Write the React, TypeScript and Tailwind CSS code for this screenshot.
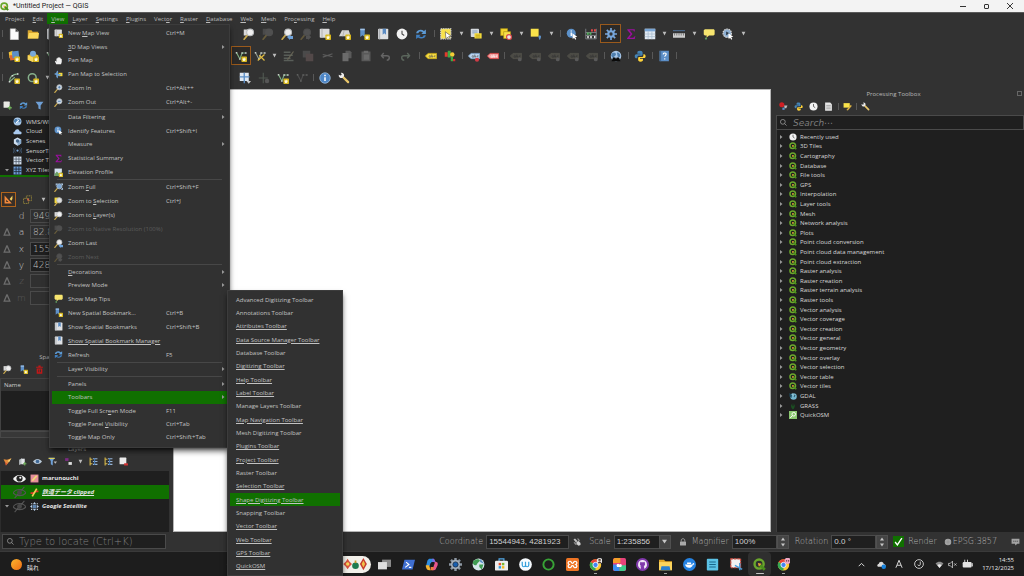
import type { ReactNode } from "react";
import clsx from "clsx";

/* ---------- icon pieces, all on a 16 x 16 grid ---------- */

const star = (
  <>
    <rect x="8.5" y="8.5" width="7.5" height="7.5" rx="1" fill="#d8b81c" />
    <path d="M12.2 9.6l.8 1.6 1.8.6-1.2 1.4.1 1.8-1.6-.7-1.7.6.2-1.7-1.1-1.4 1.8-.5z" fill="#fffbe0" />
  </>
);

const lens = (glass: string, ring = "#b9bcbe") => (
  <>
    <path d="M1.5 15L6 9.5" stroke="#c9a94e" strokeWidth="2.2" strokeLinecap="round" />
    <circle cx="9.5" cy="5.8" r="4.6" fill={glass} stroke={ring} strokeWidth="1.4" />
  </>
);

const label = (fill: string, stroke: string, text = "#555") => (
  <>
    <path d="M0.5 8L4 4.5h11.5v7H4z" fill={fill} stroke={stroke} />
    <path d="M5.5 8.8c0-2 2-2 2 0s-2 1-2 0M9 6v3.5c2 .6 2-2 0-1.500M13.800 7.600c-2-.6-2 2 0 1.600" stroke={text} fill="none" strokeWidth=".9" />
  </>
);

const vnodes = (color: string) => (
  <>
    <path d="M2 3.500L6.500 12 9.500 4h5" fill="none" stroke={color} strokeWidth="1.500" />
    <path d="M1 2.500h2v2H1zM8.500 3h2v2h-2zM13.500 3h2v2h-2zM5.500 11h2v2h-2z" fill="#c5cbc5" />
  </>
);

const refreshArrows = (
  <>
    <path d="M1.500 7C2 3 8 0.500 12 4l2.500-2v6H8.500l2-2C8 3.800 5 4.500 4.500 7z" fill="#5d9ad4" />
    <path d="M14.500 9.500c-.5 4-6.500 6-10.500 3l-2.500 2V9H7.500l-2 2c2.500 2 5.500 1 6-1.500z" fill="#3f7fc0" />
  </>
);

const wrench = (
  <>
    <path d="M7 7l6.500 6.500" stroke="#e8c66a" strokeWidth="3" strokeLinecap="round" />
    <path d="M1 3.500l2.500 1.300L5 3.500 3.800 1C6.500.5 8.800 2.800 8 5.500L5.800 8C3 8.500.5 6.500 1 3.500z" fill="#ececec" />
  </>
);

const bookmark = (
  <>
    <rect x="1.500" y="1" width="13.500" height="14" rx="1" fill="#dfe1e4" />
    <path d="M3.500 1v14" stroke="#a9adb2" strokeWidth="1.500" />
    <path d="M7.500 1h4.500v8L9.800 7 7.500 9z" fill="#5b8cc4" />
  </>
);

const clock = (
  <>
    <circle cx="8" cy="8" r="7.200" fill="#f2f2f2" />
    <path d="M8 3.500V8l3 2" fill="none" stroke="#444" strokeWidth="1.400" />
  </>
);

const hand = (
  <path d="M4 14.500L1.500 9.500l1-1 1.800 1.500V4.500h1.600L6 3h1.700l.3-1h1.700l.3 1.200h1.700v1.600H13l.8 1v5L12.500 14.500z" fill="#f0f0f0" />
);

const qgis = (
  <>
    <circle cx="7.500" cy="7.500" r="5.600" fill="none" stroke="#6aa72c" strokeWidth="3" />
    <path d="M8 8l6.500 6.500" stroke="#4c8f1c" strokeWidth="3.400" />
    <path d="M6 6l4.500 1.200-3.300 3.300z" fill="#f0a23c" />
  </>
);

const chrome = (
  <>
    <circle cx="8" cy="8.500" r="7" fill="#fcc934" />
    <path d="M8 8.500L1.900 5A7 7 0 0 1 14.100 5z" fill="#ea4335" />
    <path d="M8 8.500L1.900 5A7 7 0 0 0 8 15.500z" fill="#34a853" />
    <circle cx="8" cy="8.500" r="3.200" fill="#4285f4" stroke="#fff" />
  </>
);

const sigma = (
  <path d="M3 1.500h10v3.200h-1c-.3-1.400-.7-1.800-2-1.800H6l4 5-4.200 5H10.500c1.500 0 2-.7 2.500-2.200h.8L13 14.500H2.800v-1L7.500 8 3 2.500z" fill="#9c0fa0" />
);

const globe = (
  <>
    <circle cx="8" cy="8" r="7" fill="#a9c8e8" />
    <path d="M3 4c2-1 5-.5 5 1.500S5 8 5 10s-3-1-3.500-3zM10 3c3 1 4 3 3.500 5.500C12 10 10 9 10 7.500S8.500 4 10 3z" fill="#4f7fae" />
  </>
);

const mapPage = (
  <>
    <rect x="1" y="1" width="13" height="12" rx="1" fill="#dcdcdc" />
    <path d="M4 1v12" stroke="#b4b4b4" strokeWidth="1.500" />
  </>
);

const python = (
  <>
    <path d="M8 1c-3 0-3.500 1-3.500 2.500V5H8.500v.7H3C1.500 5.700 1 7 1 8.500S2 11 3 11h1.500V9.500C4.500 8 5.500 7.500 6.500 7.500h3.500c1 0 1.500-.8 1.500-1.800v-2C11.500 2 10.500 1 8 1z" fill="#4584b6" />
    <path d="M8.500 15.500c3 0 3.500-1 3.500-2.500v-1.500H8v-.7h5.500c1.300 0 2-1 2-2.500S14.500 5.700 13.500 5.700H12.500V7.500c0 1.200-1 1.800-2 1.800H7c-1 0-1.500.8-1.500 1.700v2c0 1.500 1 2.500 3 2.500z" fill="#ffd43b" />
  </>
);

const bubble = (
  <>
    <path d="M2.500 1.500h12l1 1.500v5.500l-1.500 1.500H8L4.500 13 5 10H2.500L1 8.500V3z" fill="#f7e56f" />
    <circle cx="4" cy="14" r="1.500" fill="#5f9f61" />
  </>
);

const cursor = <path d="M8.500 7l6.500 4.800-2.800.5 1.500 2.500-1.400.8-1.500-2.500-1.800 2z" fill="#fff" />;

const ICONS: Record<string, ReactNode> = {
  page: <path d="M3 1h7l4 4v10.500H3zM10 1v4h4" fill="#fafafa" stroke="#bbb" strokeWidth=".6" />,
  folder: (
    <>
      <path d="M1 3h5l1.500 2H15v9H1z" fill="#d9a62e" />
      <path d="M1 14L2.500 6.500H16L15 14z" fill="#fbd75b" />
    </>
  ),
  layers: (
    <>
      <path d="M1 3l5-2 2 9-6 1z" fill="#f0c43a" />
      <path d="M2 7l5 0 3 6-7 1z" fill="#e0692f" />
      <path d="M5 2l9-1 1 9-9 1z" fill="#5d8fc7" />
      {star}
    </>
  ),
  package: (
    <>
      <path d="M1 7l7-3 7 3v6l-7 3-7-3z" fill="#e3b52f" />
      <circle cx="8" cy="5" r="4" fill="#78a8d8" />
      <path d="M1 7l7 3v6l-7-3z" fill="#f6d75e" />
      {star}
    </>
  ),
  arc: (
    <>
      <path d="M2 13C2 7 6 3 13 2.500M2 13L9 7" fill="none" stroke="#86b08b" strokeWidth="1.400" />
      <path d="M1 12h2v2H1zM12 1.500h2v2h-2zM5 4h2v2H5z" fill="#d5dad5" />
      {star}
    </>
  ),
  circle: (
    <>
      <circle cx="7" cy="7.500" r="5.200" fill="none" stroke="#86b08b" strokeWidth="2" />
      {star}
    </>
  ),
  zoomin: (
    <>
      {lens("#c9d8e6")}
      <path d="M9.500 3.500v4.600M7.200 5.800h4.600" stroke="#3d6ea5" strokeWidth="1.300" />
    </>
  ),
  zoomout: (
    <>
      {lens("#c9d8e6")}
      <path d="M7.200 5.800h4.600" stroke="#3d6ea5" strokeWidth="1.500" />
    </>
  ),
  zoomfull: (
    <>
      {lens("#7ba6d4", "#a9b9c8")}
      <path d="M3 1h4L3 5zM16 1v4l-4-4zM16 12h-4l4-4z" fill="#aecbea" />
    </>
  ),
  zoomsel: (
    <>
      <rect x="1" y="1" width="9" height="10" fill="#f4d93c" />
      {lens("#dedede")}
    </>
  ),
  zoomlayer: (
    <>
      <rect x="1" y="2" width="8" height="8" fill="#d9d9d9" />
      {lens("#f0f0f0")}
    </>
  ),
  zoomnative: (
    <g opacity=".35">
      <rect x="1" y="1" width="8" height="8" fill="#777" />
      {lens("#888", "#888")}
    </g>
  ),
  zoomlast: (
    <>
      {lens("#ededed")}
      <path d="M8 12l4-3.500v2h4v4h-4v1.500z" fill="#6ea2da" />
    </>
  ),
  zoomnext: (
    <g opacity=".3">
      {lens("#999", "#888")}
      <path d="M15 12l-4-3.500v2H8v4h3v1.500z" fill="#999" />
    </g>
  ),
  mapview: (
    <>
      {mapPage}
      {star}
    </>
  ),
  map3d: (
    <>
      <path d="M4 3h9l2.500 8H0z" fill="#d6d6d6" />
      <path d="M5 11L7 3" stroke="#aaa" />
      {star}
    </>
  ),
  newbookmark: (
    <>
      <path d="M3 1h6v11L6 9.500 3 12z" fill="#5f91c9" />
      <path d="M3 1h6v2H3z" fill="#a2c2e4" />
      {star}
    </>
  ),
  bookmark,
  clock,
  refresh: refreshArrows,
  hand,
  pansel: (
    <>
      <path d="M8 5h7v6H8z" fill="#f3da3d" />
      <path d="M6 1l2 3H7v3h3l3 1-3 2H7v3l-1 2-2-3V9L1 8V6l3-.5V4z" fill="#6c9fd3" />
    </>
  ),
  selectrect: (
    <>
      <rect x="1" y="1" width="13.500" height="13.500" fill="#f8e34c" stroke="#d8d8d8" strokeWidth="1.500" strokeDasharray="2 1" />
      <path d="M7 5l8 6-3.500.5 2 3-1.500 1-2-3.200L8 14.500z" fill="#fff" stroke="#333" strokeWidth=".7" />
    </>
  ),
  selectform: (
    <>
      <rect x="1" y="1" width="11" height="11" rx="1" fill="#d5d9de" />
      <path d="M3 4h7M3 6.500h7" stroke="#6a8db3" />
      <rect x="6" y="7" width="9.500" height="7" fill="#f5dc3c" />
      <path d="M7.500 9.500h6M7.500 12h6" stroke="#a89010" />
    </>
  ),
  deselect: (
    <>
      <rect x="1" y="1" width="9" height="9" fill="#f4d62f" stroke="#af9416" />
      <rect x="5" y="5" width="9" height="9" fill="#f9e24a" stroke="#af9416" />
      <circle cx="12" cy="12" r="3.300" fill="#e7e7e7" stroke="#d7484c" strokeWidth="1.600" />
    </>
  ),
  selectloc: (
    <>
      <rect x="1" y="1" width="10.500" height="10.500" fill="#f9e24a" />
      <path d="M13 16c-2-3-2.500-6 0-6s2 3 0 6z" fill="#5f93cb" />
    </>
  ),
  identify: (
    <>
      <circle cx="7" cy="7" r="6" fill="#5c91c9" />
      <path d="M7 6v4.500M7 3.200v1.500" stroke="#fff" strokeWidth="1.800" />
      {cursor}
    </>
  ),
  calc: (
    <>
      <path d="M1 1v13.500h14V1M1 6h14M1 10h14" fill="none" stroke="#8c9296" strokeWidth="1" />
      <path d="M8 1.500h2.500v3H8zM12 1.500h2.500v3H12z" fill="#e44848" />
      <path d="M2.500 6h2.500v3H2.500zM6 6h2.500v3H6z" fill="#55b45f" />
      <path d="M3 10.500h2v3H3zM7 10.500h2v3H7zM12 10.500h2v3h-2z" fill="#eee" />
    </>
  ),
  gear: (
    <>
      <path d="M8 0v16M0 8h16M2.400 2.400l11.200 11.200M13.600 2.400L2.400 13.600" stroke="#77a7dc" strokeWidth="2.200" />
      <circle cx="8" cy="8" r="5" fill="#77a7dc" />
      <circle cx="8" cy="8" r="2.200" fill="#323232" />
    </>
  ),
  sigma,
  table: (
    <>
      <rect x="1" y="1" width="14" height="14" fill="#e4ecf4" />
      <path d="M1 1h14v3.500H1z" fill="#7aa6d6" />
      <path d="M1 8h14M1 11.500h14M5.500 4.500V15M10.500 4.500V15" stroke="#a8bccf" />
    </>
  ),
  ruler: (
    <>
      <path d="M0 3.500h16" stroke="#496484" strokeWidth="1.600" />
      <path d="M0 7h16v6H0z" fill="#cdcdcd" />
      <path d="M2 7v3M5 7v3M8 7v3M11 7v3M14 7v3" stroke="#666" />
    </>
  ),
  bubble,
  zoomgear: (
    <>
      <circle cx="7" cy="7" r="5.500" fill="#8eb0d4" stroke="#d5d5d5" strokeWidth="1.800" strokeDasharray="2 1" />
      <path d="M5.500 4.500L10 7l-4.500 2.500z" fill="#2f3c4a" />
      {cursor}
    </>
  ),
  vnew: (
    <>
      {vnodes("#7dad82")}
      {star}
    </>
  ),
  vtool: (
    <>
      {vnodes("#8a948b")}
      <path d="M5 14L14 6M7 7l7 7" stroke="#e0bd43" strokeWidth="1.600" />
    </>
  ),
  vdim: <g opacity=".3">{vnodes("#8c8c8c")}</g>,
  editlines: (
    <g opacity=".4">
      <path d="M1 3h9M1 7h12M1 11h9M1 14h13" stroke="#94a193" strokeWidth="2" />
      <path d="M14 2L6 13" stroke="#bfb68f" strokeWidth="1.500" />
    </g>
  ),
  stack: (
    <g opacity=".35">
      <path d="M1 1h10v9H1z" fill="#777" />
      <path d="M5 5h10v10H5z" fill="#927676" />
    </g>
  ),
  cut: <path d="M1 6l13 3M14 5L1 9.500" stroke="#5c5c5c" strokeWidth="1.700" />,
  copy: (
    <g fill="#6b6b6b">
      <path d="M6 1h6l2 2v8H6z" opacity=".7" />
      <path d="M2 4h8v11H2z" />
    </g>
  ),
  paste: (
    <g fill="#6a6a6a">
      <path d="M2 2h12v13H2z" opacity=".7" />
      <path d="M5 1h6v3H5zM5 6h7v7H5z" />
    </g>
  ),
  undo: <path d="M5 4L2 7.500 5 11M3 7.500h6c5 0 4 6 0 6" fill="none" stroke="#656565" strokeWidth="2" />,
  redo: <path d="M11 4l3 3.500-3 3.500M13 7.500H7c-5 0-4 6 0 6" fill="none" stroke="#5b665c" strokeWidth="2" />,
  labely: label("#f5db40", "#c9ab16"),
  diagram: (
    <>
      <path d="M1 3h4v6H1z" fill="#e23b2e" />
      <path d="M5 1h4v9H5z" fill="#3faa45" />
      <circle cx="11" cy="6" r="3" fill="#f2ce36" />
      <path d="M9 9h3v6H9z" fill="#3faa45" />
      <path d="M12 12h3v3h-3z" fill="#d32f2f" />
    </>
  ),
  labelb: (
    <>
      {label("#b9d3ef", "#7ea4cc")}
      <circle cx="12" cy="13" r="2.800" fill="#cf3b46" />
    </>
  ),
  labelr: label("#f4a0a0", "#e03e3e", "#fff"),
  labeldim: (
    <g opacity=".45">
      {label("#6c6a5e", "#7b7868", "#333")}
      <circle cx="13" cy="12.500" r="2.500" fill="#8a8a8a" />
    </g>
  ),
  metasearch: (
    <>
      {globe}
      <path d="M2 15l2-5h3l1 2 1-2h3l2 5z" fill="#0a0a0a" />
    </>
  ),
  python,
  help: (
    <>
      <rect x="2" y="1" width="12.500" height="14" fill="#5c8fc8" />
      <path d="M3.500 1v14" stroke="#35597f" />
      <path d="M7 6c0-3 4.500-2.500 3.800 0-.3 1-1.800 1.500-1.800 3M9 11v1.600" fill="none" stroke="#fff" strokeWidth="1.500" />
    </>
  ),
  info: (
    <>
      <circle cx="8" cy="8" r="7" fill="#4d86c6" stroke="#9dbfe2" />
      <path d="M8 7v5M8 3.800v1.700" stroke="#fff" strokeWidth="2" />
    </>
  ),
  wrench,
  snapgrid: (
    <>
      <rect x="1" y="1" width="12" height="11" fill="#dfe8f2" />
      <path d="M7 1v14M1 6.500h13" stroke="#5c8fc8" strokeWidth="1.800" />
      <path d="M10 12h6l-3 3.500z" fill="#ccc" />
    </>
  ),
  crossdim: (
    <g opacity=".35">
      <path d="M7 1v14M1 8h12" stroke="#8aa08c" strokeWidth="1.500" />
      <circle cx="12" cy="12" r="3" fill="#999" />
    </g>
  ),
  addlayer: (
    <>
      <rect x="1" y="1" width="11" height="11" rx="1" fill="#e9e9e4" />
      <path d="M12 8.500v7M8.500 12h7" stroke="#6fae5b" strokeWidth="2.400" />
    </>
  ),
  filter: <path d="M1 1.500h14L10 8v7l-4-1.500V8z" fill="#6fa0d6" />,
  filterdrop: (
    <>
      <path d="M1 1.500h11L8.500 7v8L5 13V7z" fill="#6fa0d6" />
      <path d="M1 1.500h11v2H1z" fill="#dfd05a" />
      <path d="M10 8h6l-3 4z" fill="#bbb" />
    </>
  ),
  wms: (
    <>
      {globe}
      <path d="M5 11l6-6" stroke="#fff" strokeWidth="1.500" />
    </>
  ),
  cloud: <path d="M3 13C-.5 12.500 0 8 3.500 8 4 3 11 3 11.500 7.500 16.500 7.500 16 13 13 13z" fill="#a9c9ee" />,
  scenes: (
    <>
      <path d="M8 1l6.500 3.500v7L8 15.500l-6.500-4v-7z" fill="#cfdff0" />
      <path d="M8 8l6.500-3.500v7L8 15.500z" fill="#87a9cc" />
      <circle cx="8" cy="7" r="3" fill="#47698c" />
    </>
  ),
  sensor: (
    <>
      <circle cx="8" cy="8" r="2" fill="#78a7db" />
      <path d="M4.500 4.500c-2 2-2 5 0 7M11.500 4.500c2 2 2 5 0 7M2 3c-2.500 3-2.500 7 0 10M14 3c2.500 3 2.500 7 0 10" fill="none" stroke="#5a7fa8" />
    </>
  ),
  grid: (
    <>
      <rect x="1" y="1" width="14" height="14" fill="#d5e2f0" />
      <path d="M1 5.500h14M1 10h14M5.500 1v14M10.500 1v14" stroke="#47525e" strokeWidth="1.300" />
    </>
  ),
  gridblue: (
    <>
      <rect x="1" y="1" width="14" height="14" fill="#6f9fd8" />
      <path d="M1 5.500h14M1 10h14M5.500 1v14M10.500 1v14" stroke="#1f2a38" strokeWidth="1.500" />
    </>
  ),
  triangle: (
    <>
      <path d="M1 1v14h13zM4 8.500l4 4H4z" fill="#f1893c" fillRule="evenodd" />
      <path d="M15 1l-5 6 3 3 2-3z" fill="#f0d264" />
    </>
  ),
  construct: (
    <>
      <path d="M1 15V6h9v9zM6 6V1.500h9V10h-5" fill="none" stroke="#9a8a3b" strokeWidth="1.600" strokeDasharray="2 1" />
      <path d="M7 7l4-1-2 6z" fill="#e0604c" />
    </>
  ),
  trash: <path d="M2 3h12v2H2zM6 1h4v2H6zM3 6h10v9.500H3zM6 8v5h1.500V8zM9 8v5h1.500V8z" fill="#c01818" fillRule="evenodd" />,
  style: (
    <>
      <path d="M1 4l6 1 8-3-6 9-4 4-1-5z" fill="#e28a3b" />
      <path d="M8 7l7-5-4 7z" fill="#f3da7c" />
      <path d="M3 9l4 3-1 3z" fill="#cc4337" />
    </>
  ),
  addgroup: (
    <>
      <path d="M2 5l5-3v10l-5 2z" fill="#b7bdc2" />
      <path d="M6 3h6v10H6z" fill="#e2e5e8" />
      <path d="M12 9v6M9 12h6" stroke="#6fae5b" strokeWidth="2" />
    </>
  ),
  eyeblue: (
    <>
      <path d="M0 8c4-6 12-6 16 0-4 6-12 6-16 0z" fill="#b9c9d8" />
      <circle cx="8" cy="8" r="3.200" fill="#3f6896" />
    </>
  ),
  expr: (
    <>
      <path d="M2 2h6v5H2z" fill="#7c2b83" />
      <path d="M8 9h6v5H8z" fill="#dedede" />
    </>
  ),
  expand: (
    <>
      <path d="M2 1v14M2 4h4M2 12h4" stroke="#d4b64a" strokeWidth="2" />
      <path d="M7 3h8M7 8h8M7 13h8" stroke="#9bb7d6" strokeWidth="2" />
      <path d="M10 2v12" stroke="#477bb7" strokeWidth="2" />
    </>
  ),
  remove: (
    <>
      <rect x="1" y="1" width="12" height="12" rx="1" fill="#ececec" />
      <rect x="9" y="11" width="7" height="4" rx="1" fill="#cf3434" />
    </>
  ),
  eye: (
    <>
      <path d="M0 8.500C4 2 12 2 16 8.500 12 14 4 14 0 8.500z" fill="#f4f4f4" />
      <circle cx="8" cy="8" r="3.800" fill="#222" />
      <circle cx="9" cy="7" r="1.300" fill="#fff" />
    </>
  ),
  eyeoff: (
    <>
      <path d="M0 8.500C4 3 12 3 16 8.500 12 13 4 13 0 8.500zM2 15L14 1" fill="none" stroke="#555" strokeWidth="1.300" />
      <circle cx="8" cy="8" r="3" fill="#484848" />
    </>
  ),
  polylayer: (
    <>
      <rect x="1" y="1" width="14" height="14" fill="#e58f9a" />
      <path d="M4 12L12 3" stroke="#f4dc76" strokeWidth="3" />
    </>
  ),
  linelayer: (
    <>
      <path d="M1 9h5l4-3h5" fill="none" stroke="#e0322c" strokeWidth="3" />
      <path d="M4 15L12 1" stroke="#f3cf55" strokeWidth="3" />
    </>
  ),
  xyzlayer: (
    <>
      <path d="M8 0l3 4H5zM8 16l3-4H5zM0 8l4-3v6zM16 8l-4-3v6z" fill="#b4cce5" />
      <path d="M5 5h6v6H5z" fill="#5c83ad" />
      <path d="M2 2h2v2H2zM12 2h2v2h-2zM2 12h2v2H2zM12 12h2v2h-2z" fill="#d6e3f0" />
    </>
  ),
  elevation: (
    <>
      <rect x="1" y="1" width="13" height="13" fill="#d5e4f1" />
      <path d="M1 11l4-5 4 4 5-3v7H1z" fill="#6b9f64" />
      {star}
    </>
  ),
  models: (
    <>
      <circle cx="5" cy="5" r="4.500" fill="#cf1f24" />
      <path d="M6 10h4v4H6z" fill="#5c8fc8" />
      <path d="M9 6h6l-2 5h-3z" fill="#bcbcbc" />
    </>
  ),
  results: (
    <>
      <path d="M2 1h9l3 3v11.500H2z" fill="#e6e6e6" />
      <path d="M4 6h8M4 9h8M4 12h8" stroke="#777" />
    </>
  ),
  editplace: (
    <>
      <path d="M1 2h11v8H1z" fill="#f9e24a" />
      <path d="M6 14l8-9 1.500 2-7 8z" fill="#dfb544" />
    </>
  ),
  qgis,
  gdal: (
    <>
      <circle cx="9" cy="9" r="6.500" fill="#74b6cf" />
      <path d="M1 2l5 4-1 6-4-3zM9 4l4 3-3 4z" fill="#1f4f66" />
      <path d="M6 1l2 4 4 1-4 1z" fill="#dff2f7" />
    </>
  ),
  grass: <path d="M8 15C3 11 4 6 5 4l2 5 1-8 1 8 2-5c1 3 1 8-3 11z" fill="#1b4f22" />,
  quickosm: (
    <>
      <rect x="0" y="0" width="16" height="16" fill="#8bc870" />
      <circle cx="9.500" cy="6.500" r="3.600" fill="none" stroke="#fff" strokeWidth="1.800" />
      <path d="M2.500 14L7 9" stroke="#fff" strokeWidth="2" />
    </>
  ),
  search: (
    <path d="M10.500 10.500L15 15M12 6.500a5.500 5.500 0 1 1-11 0 5.500 5.500 0 0 1 11 0z" fill="none" stroke="#a8a8a8" strokeWidth="1.600" />
  ),
  delta: <path d="M7 2h2l5 12H2zM5 12h6L8 5z" fill="#6d6d6d" fillRule="evenodd" />,
  satellite: (
    <>
      <path d="M1 3l3-2 5 5-3 3z" fill="#c0c0c0" />
      <path d="M8 1l3 0 3 4-2 2zM1 9l3-1 4 5-3 1z" fill="#8c8c8c" />
      <path d="M7 8l4-2 4 4v4l-4 1.500L7 12z" fill="#d2d2d2" />
    </>
  ),
  lock: (
    <>
      <rect x="2" y="7" width="12" height="8" rx="1" fill="#aaa" />
      <path d="M4.500 7V4.500c0-4 7-4 7 0V7" fill="none" stroke="#aaa" strokeWidth="1.800" />
    </>
  ),
  crs: (
    <>
      <circle cx="8" cy="8" r="6.500" fill="#a6a6a6" />
      <path d="M2 8h12M8 2v12" stroke="#8a8a8a" />
    </>
  ),
  message: (
    <>
      <path d="M1 3h14v9h-4l-3 3-1-3H1z" fill="#a2a2a2" />
      <path d="M4 7.500h2M7.500 7.500h2M11 7.500h1.500" stroke="#333" strokeWidth="1.500" />
    </>
  ),
  /* desktop taskbar */
  taskview: (
    <>
      <path d="M5 2h11v9H5z" fill="#8a8a8a" />
      <path d="M0 5h11v9H0z" fill="#dedede" />
    </>
  ),
  powershell: (
    <>
      <path d="M3 2h13l-3 12H0z" fill="#3f6fd1" />
      <path d="M5 5l3.500 3L4 11.500M8.500 11.500h3" fill="none" stroke="#fff" strokeWidth="1.400" />
    </>
  ),
  copilot: (
    <>
      <path d="M5 1h5l2 4H8L5 11H1L3 3z" fill="#2f8ee0" />
      <path d="M10 1c2 0 2 3 3 4 3 0 3 2 2.500 4L13 14c-1 1-3 1-4 1l3-9z" fill="#e8568c" />
      <path d="M1 9h4l2 6H5c-3 0-4-3-4-6z" fill="#f5b32f" />
      <path d="M7 11h4l-1 4H7z" fill="#f07a3c" />
      <path d="M9 1h2l2 4H9z" fill="#7c6be6" />
      <path d="M7 6h3l-1 4H6z" fill="#1c1c1c" />
    </>
  ),
  settings: (
    <>
      <path d="M8 0v16M0 8h16M2.400 2.400l11.200 11.200M13.600 2.400L2.400 13.600" stroke="#8c97a3" strokeWidth="3" />
      <circle cx="8" cy="8" r="5.700" fill="#a4afba" />
      <circle cx="8" cy="8" r="3.200" fill="#185fb0" stroke="#1c2e42" />
    </>
  ),
  earth: (
    <>
      <circle cx="8" cy="8" r="7.300" fill="#d5e6ea" />
      <path d="M1 5c2-4 6-4 8-3s-1 3-2 4-1 3-3 3-3-2-3-4zM9 8l5 0-2 6-3-3z" fill="#3f9b52" />
      <path d="M10 1l5 6-5-2z" fill="#5289c5" />
    </>
  ),
  store: (
    <>
      <path d="M5 4V1h6v3" fill="none" stroke="#53a9e8" strokeWidth="1.400" />
      <rect x="0" y="3.500" width="16" height="12" rx="1.500" fill="#ededed" />
      <path d="M4.500 6h3v3h-3z" fill="#e8512a" />
      <path d="M8.500 6h3v3h-3z" fill="#7cb82f" />
      <path d="M4.500 10h3v3h-3z" fill="#2b9de0" />
      <path d="M8.500 10h3v3h-3z" fill="#f5b81f" />
    </>
  ),
  wacom: (
    <>
      <circle cx="8" cy="8" r="7.800" fill="#f7fbff" />
      <path d="M4 4.500v4c0 3 4 3 4 0V4.500M8 8.500c0 3 4 3 4 0v-4" fill="none" stroke="#36a0dc" strokeWidth="1.500" />
    </>
  ),
  ring: <circle cx="8" cy="8" r="6.300" fill="none" stroke="#38a336" strokeWidth="2.400" />,
  xampp: (
    <>
      <rect x="0" y="0" width="16" height="16" rx="2" fill="#ee7424" />
      <path d="M5 4c-3 0-3 3-1 4-2 1-2 4 1 4 2 0 1-2.500 3-2.500S9 12 11 12c3 0 3-3 1-4 2-1 2-4-1-4-2 0-1 2.500-3 2.500S7 4 5 4z" fill="none" stroke="#fff" strokeWidth="1.500" />
    </>
  ),
  chromea: (
    <>
      {chrome}
      <circle cx="13" cy="3.500" r="3.500" fill="#e9e9e9" />
      <path d="M11.500 2.500a1.500 1.500 0 0 1 3 0v1h-3zM11 6.500c0-3 4-3 4 0z" fill="#52392d" />
    </>
  ),
  creative: (
    <>
      <rect x="0" y="0" width="16" height="16" rx="2" fill="#e7427b" />
      <path d="M0 8h8v8H2l-2-2z" fill="#3b8ff2" />
      <path d="M8 9h8v5l-2 2H8z" fill="#3ecb8c" />
      <path d="M2 0h7v6H0V2z" fill="#f4a02a" />
      <path d="M5 11c-2-3 1-5 3-3 2-2 4 1 2 3z" fill="#fff" />
    </>
  ),
  github: (
    <>
      <circle cx="8" cy="8" r="8" fill="#8139ac" />
      <path d="M8 2.500a5.500 5.500 0 0 0-2 10.600V11.500l-1.500-.7 1.500-.3.500-.7C4.500 9.300 4.500 7 5.200 6.200L5.300 4.700 6.700 5.300h2.600l1.400-.6.1 1.500c.7.800.7 3.100-1.300 3.600l.5 1v2.300A5.500 5.500 0 0 0 8 2.500z" fill="#f2e8f7" />
    </>
  ),
  explorer: (
    <>
      <path d="M0 2h6l2 2h8v11H0z" fill="#e0a526" />
      <path d="M0 5h16v10H0z" fill="#fcd45c" />
      <path d="M3 10h10l1 5H2z" fill="#2a7fcf" />
    </>
  ),
  docker: (
    <>
      <circle cx="8" cy="8" r="8" fill="#2583e3" />
      <path d="M2.500 8h9c.3-1.500 1-2 1.500-2l1 1.500c-.5 1-1.500 1-2 1C11 13 4 13.500 2.500 8zM5 5.500h5V7.500H5z" fill="#fff" />
    </>
  ),
  notepad: (
    <>
      <rect x="1" y="1" width="14" height="14.500" rx="1" fill="#5cc3e6" />
      <path d="M4 5h8M4 8h8M4 11h8" stroke="#18688c" strokeWidth="1.300" />
    </>
  ),
  snip: (
    <>
      <rect x="1" y="1" width="12" height="11" fill="#f2f2f2" stroke="#cf4c40" strokeWidth="1.500" strokeDasharray="3 1" />
      <path d="M6 9l9 5M12 6v9" stroke="#4a9cd8" strokeWidth="1.700" />
    </>
  ),
  chromeb: (
    <>
      {chrome}
      <circle cx="13" cy="3.500" r="3.800" fill="#efa8c4" />
      <path d="M11 3.500h1.500M13.500 3.500H15" stroke="#573040" strokeWidth="1.500" />
    </>
  ),
  chevron: <path d="M3 11l5-5 5 5" fill="none" stroke="#ddd" strokeWidth="1.700" />,
  onedrive: (
    <>
      <path d="M2 12C-1 10 1 7 3 7c1-5 8-5 9 0 2 0 4 2 3 5z" fill="#d9d9d9" />
      <circle cx="12" cy="12" r="4" fill="#1682dc" />
    </>
  ),
  ime: <path d="M3 14L8 2l5 12M5 10h6" fill="none" stroke="#e2e2e2" strokeWidth="1.500" />,
  timer: (
    <path d="M8 1a7 7 0 1 1 0 14A7 7 0 0 1 8 1zM10 4v5c0 2-4 2-4 0" fill="none" stroke="#ddd" strokeWidth="1.400" />
  ),
  wifi: (
    <>
      <path d="M1 6c4-4 10-4 14 0L8 14z" fill="#8d8d8d" />
      <path d="M4 9c3-2 5-2 8 0l-4 5z" fill="#ededed" />
    </>
  ),
  mute: (
    <path d="M1 6h3l4-4v12l-4-4H1zM11 6l4 4M15 6l-4 4" fill="none" stroke="#ddd" strokeWidth="1.300" />
  ),
  battery: (
    <>
      <rect x="1" y="4.500" width="13" height="8" rx="1.500" fill="#e3e3e3" />
      <path d="M14.500 7h1.500v3h-1.500zM4 1v5M8 1v5" stroke="#e3e3e3" strokeWidth="1.300" />
    </>
  ),
};

function Icon({ name, className = "size-3" }: { name: string; className?: string }) {
  return (
    <svg viewBox="0 0 16 16" aria-hidden="true" className={clsx("flex-none", className)}>
      {ICONS[name]}
    </svg>
  );
}

/* ---------- toolbars ---------- */

function Tool({ name, active, small }: { name: string; active?: boolean; small?: boolean }) {
  return (
    <button
      type="button"
      aria-label={name}
      className={clsx(
        "flex flex-1 items-center justify-center",
        small ? "h-[15px]" : "h-[19px]",
        active && "border border-[#9a5a1c] bg-[#2c2a28]",
      )}
    >
      <Icon name={name} className={small ? "size-[9px]" : "size-3"} />
    </button>
  );
}

function Drop({ className = "w-[10px]" }: { className?: string }) {
  return (
    <button type="button" aria-label="More" className={clsx("flex flex-none justify-center", className)}>
      <svg viewBox="0 0 8 8" className="size-[5px]" aria-hidden="true">
        <path d="M1 1h6L4 7z" fill="#bdbdbd" />
      </svg>
    </button>
  );
}

function Divider() {
  return (
    <span className="flex w-1 flex-none justify-center">
      <span className="h-[7px] w-px bg-[#585858]" />
    </span>
  );
}

function Group({ tools, width, active }: { tools: string[]; width: string; active?: string }) {
  return (
    <div className={clsx("flex flex-none items-center", width)}>
      {tools.map((t, i) => (
        <Tool key={i} name={t} active={t === active} />
      ))}
    </div>
  );
}

function Toolbars() {
  return (
    <div className="flex flex-none flex-col gap-[3px] pb-[2px]">
      <div className="flex h-[19px] items-center">
        <Divider />
        <Group tools={["page", "folder", "bookmark"]} width="w-[57px]" />
        <div className="w-[178px] flex-none" />
        <Group
          tools={["zoomlayer", "zoomnative", "zoomlast", "zoomnext", "mapview", "map3d", "newbookmark", "bookmark", "clock", "refresh"]}
          width="w-[192px]"
        />
        <div className="flex w-[5px] flex-none justify-end"><Divider /></div>
        {["selectrect", "selectform", "deselect", "selectloc"].map((t) => (
          <div key={t} className="flex w-[30px] flex-none items-center">
            <Tool name={t} />
            <Drop />
          </div>
        ))}
        <div className="flex w-[6px] flex-none justify-end"><Divider /></div>
        <Group tools={["identify", "calc", "gear", "sigma", "table"]} width="w-[97px]" active="gear" />
        <Drop />
        <Group tools={["ruler"]} width="w-5" />
        <Drop />
        <Group tools={["bubble", "zoomgear"]} width="w-[39px]" />
        <Drop />
      </div>

      <div className="flex h-[19px] items-center">
        <Divider />
        <Group tools={["layers", "package", "vnew"]} width="w-[57px]" />
        <div className="w-[170px] flex-none" />
        <Group tools={["vnew", "vtool"]} width="w-[38px]" active="vnew" />
        <Drop />
        <Group tools={["editlines", "stack", "cut", "copy", "paste", "undo", "redo"]} width="w-[136px]" />
        <div className="flex w-[6px] flex-none justify-end"><Divider /></div>
        <Group tools={["labely", "diagram"]} width="w-[39px]" />
        <Divider />
        <Group tools={["labelb", "labelr"]} width="w-[38px]" />
        <Divider />
        <Group tools={["labeldim", "labeldim", "labeldim", "labeldim", "labeldim"]} width="w-[96px]" />
        <Divider />
        <Group tools={["metasearch"]} width="w-5" />
        <Divider />
        <Group tools={["python"]} width="w-5" />
        <Divider />
        <Group tools={["help"]} width="w-5" />
        <Divider />
      </div>

      <div className="flex h-[19px] items-center">
        <Divider />
        <Group tools={["arc", "circle"]} width="w-[38px]" />
        <Drop />
        <div className="w-[183px] flex-none" />
        <Group tools={["snapgrid", "crossdim", "vnew", "vdim"]} width="w-[76px]" />
        <Divider />
        <Group tools={["info", "wrench"]} width="w-[38px]" />
      </div>
    </div>
  );
}

/* ---------- menus ---------- */

/* An ampersand in a menu text marks the underlined access key. */
function Mnemonic({ text }: { text: string }) {
  const at = text.indexOf("&");
  if (at < 0) return <>{text}</>;
  return (
    <>
      {text.slice(0, at)}
      <u>{text[at + 1]}</u>
      {text.slice(at + 2)}
    </>
  );
}

interface MenuEntry {
  text: string;
  icon?: string;
  keys?: string;
  sub?: boolean;
  off?: boolean;
  open?: boolean;
  checked?: boolean;
}

const VIEW_MENU: MenuEntry[][] = [
  [
    { text: "New &Map View", icon: "mapview", keys: "Ctrl+M" },
    { text: "&3D Map Views", sub: true },
    { text: "Pan Map", icon: "hand" },
    { text: "Pan Map to Selection", icon: "pansel" },
    { text: "Zoom In", icon: "zoomin", keys: "Ctrl+Alt++" },
    { text: "Zoom Out", icon: "zoomout", keys: "Ctrl+Alt+-" },
  ],
  [
    { text: "Data Filtering", sub: true },
    { text: "Identify Features", icon: "identify", keys: "Ctrl+Shift+I" },
    { text: "Measure", sub: true },
    { text: "Statistical Summary", icon: "sigma" },
    { text: "Elevation Profile", icon: "elevation" },
  ],
  [
    { text: "Zoom &Full", icon: "zoomfull", keys: "Ctrl+Shift+F" },
    { text: "Zoom to &Selection", icon: "zoomsel", keys: "Ctrl+J" },
    { text: "Zoom to &Layer(s)", icon: "zoomlayer" },
    { text: "Zoom to Native Resolution (100%)", icon: "zoomnative", off: true },
    { text: "Zoom Last", icon: "zoomlast" },
    { text: "Zoom Next", icon: "zoomnext", off: true },
  ],
  [
    { text: "&Decorations", sub: true },
    { text: "Preview Mode", sub: true },
    { text: "Show Map Tips", icon: "bubble" },
    { text: "New Spatial Bookmark...", icon: "newbookmark", keys: "Ctrl+B" },
    { text: "Show Spatial Bookmarks", icon: "bookmark", keys: "Ctrl+Shift+B" },
    { text: "Show Spatial Bookmark Manager", icon: "bookmark", checked: true },
    { text: "Refresh", icon: "refresh", keys: "F5" },
  ],
  [{ text: "Layer Visibility", sub: true }],
  [
    { text: "Panels", sub: true },
    { text: "Toolbars", sub: true, open: true },
    { text: "Toggle Full Scr&een Mode", keys: "F11" },
    { text: "Toggle Panel &Visibility", keys: "Ctrl+Tab" },
    { text: "Toggle Map Only", keys: "Ctrl+Shift+Tab" },
  ],
];

function MenuRow({ entry }: { entry: MenuEntry }) {
  return (
    <button
      type="button"
      role="menuitem"
      disabled={entry.off}
      className={clsx(
        "flex w-full items-center pl-[2px] text-left",
        entry.icon ? "basis-[14px]" : "grow basis-[13px]",
        entry.open && "bg-[#107000]",
        entry.off ? "text-[#5c5c5c]" : "text-[#c2c2c2]",
      )}
    >
      <span className="w-[14px] flex-none">
        {entry.icon && <Icon name={entry.icon} className="size-[9px]" />}
      </span>
      <span className={clsx("w-[98px] flex-none whitespace-nowrap", entry.checked && "underline")}>
        <Mnemonic text={entry.text} />
      </span>
      <span className="flex-1 whitespace-nowrap">{entry.keys}</span>
      {entry.sub && <Caret className="mr-[2px]" />}
    </button>
  );
}

function Caret({ className }: { className?: string }) {
  return (
    <svg viewBox="0 0 8 8" aria-hidden="true" className={clsx("size-1 flex-none", className)}>
      <path d="M2 0l5 4-5 4z" fill="#999" />
    </svg>
  );
}

function ViewMenu() {
  return (
    <div
      role="menu"
      className="absolute top-6 left-[49px] z-10 flex h-[424px] w-[181px] flex-col border border-[#3c3c3c] bg-[#313131] pt-px pr-[2px] pb-[3px] pl-[2px] shadow-md shadow-black/60"
    >
      {VIEW_MENU.map((group, g) => (
        <div key={g} className="contents">
          {g > 0 && <hr className="mx-[5px] h-px flex-none border-0 bg-[#474747]" />}
          {group.map((entry) => (
            <MenuRow key={entry.text} entry={entry} />
          ))}
        </div>
      ))}
    </div>
  );
}

const TOOLBAR_MENU: [string, boolean][] = [
  ["Advanced Digitizing Toolbar", false],
  ["Annotations Toolbar", false],
  ["Attributes Toolbar", true],
  ["Data Source Manager Toolbar", true],
  ["Database Toolbar", false],
  ["Digitizing Toolbar", true],
  ["Help Toolbar", true],
  ["Label Toolbar", true],
  ["Manage Layers Toolbar", false],
  ["Map Navigation Toolbar", true],
  ["Mesh Digitizing Toolbar", false],
  ["Plugins Toolbar", true],
  ["Project Toolbar", true],
  ["Raster Toolbar", false],
  ["Selection Toolbar", true],
  ["Shape Digitizing Toolbar", true],
  ["Snapping Toolbar", false],
  ["Vector Toolbar", true],
  ["Web Toolbar", true],
  ["GPS Toolbar", true],
  ["QuickOSM", true],
];

function ToolbarsMenu() {
  return (
    <div
      role="menu"
      className="absolute top-[290px] left-[227px] z-20 grid h-[286px] w-[116px] auto-rows-fr border border-[#3c3c3c] bg-[#313131] py-[2px] pr-[2px] pl-[2px] shadow-md shadow-black/60"
    >
      {TOOLBAR_MENU.map(([text, on]) => (
        <button
          key={text}
          type="button"
          role="menuitemcheckbox"
          aria-checked={on}
          className={clsx(
            "flex items-center pl-[6px] whitespace-nowrap text-[#c2c2c2]",
            on && "underline",
            text.startsWith("Shape") && "bg-[#107000]",
          )}
        >
          {text}
        </button>
      ))}
    </div>
  );
}

/* ---------- left docks ---------- */

const BROWSER = [
  ["wms", "WMS/WMTS"],
  ["cloud", "Cloud"],
  ["scenes", "Scenes"],
  ["sensor", "SensorThings"],
  ["grid", "Vector Tiles"],
  ["gridblue", "XYZ Tiles"],
];

const DIGITIZING = [
  { id: "d", value: "9497", off: false, lock: false },
  { id: "a", value: "82.88", off: false, lock: true },
  { id: "x", value: "15544", off: false, lock: true },
  { id: "y", value: "4281", off: false, lock: true },
  { id: "z", value: "", off: true, lock: true },
  { id: "m", value: "", off: true, lock: true },
];

function LeftDocks() {
  return (
    <aside className="flex w-[169px] flex-none flex-col text-[#d0d0d0]">
      <div className="flex w-[47px] items-center pt-[9px] pb-[3px]">
        <Tool name="addlayer" small />
        <Tool name="refresh" small />
        <Tool name="filter" small />
      </div>
      <ul className="grid h-[61px] flex-none auto-rows-fr border-b-2 border-[#107000] bg-[#1f1f1f] pt-px">
        {BROWSER.map(([icon, text]) => (
          <li key={text} className="flex items-center gap-1">
            <span className="flex w-[9px] justify-end">
              {text === "XYZ Tiles" && <Caret className="rotate-90" />}
            </span>
            <Icon name={icon} className="size-[9px]" />
            <span className="leading-none">{text}</span>
          </li>
        ))}
      </ul>

      <div className="flex h-[30px] flex-none items-end gap-1 pl-[1px]">
        <button type="button" aria-label="Enable" className="flex size-[15px] items-center justify-center border border-[#b0641c] bg-[#3a2f27]">
          <Icon name="triangle" className="size-[9px]" />
        </button>
        <button type="button" aria-label="Construction" className="flex size-[15px] items-center justify-center">
          <Icon name="construct" className="size-[9px]" />
        </button>
        <Drop className="h-[10px] w-2" />
      </div>
      <div className="grid h-[99px] flex-none auto-rows-fr pt-[1px] font-['DejaVu_Sans'] text-[9px] font-extralight">
        {DIGITIZING.map((f) => (
          <label key={f.id} className={clsx("flex items-center", f.off ? "text-[#5b5b5b]" : "text-[#c6c6c6]")}>
            <span className="w-[13px] flex-none pl-[2px]">
              {f.lock && <Icon name="delta" className="size-[10px]" />}
            </span>
            <span className="w-[17px] flex-none text-center">{f.id}</span>
            <input
              defaultValue={f.value}
              disabled={f.off}
              className={clsx(
                "h-[14px] min-w-0 flex-1 border border-[#4a4a4a] px-[2px]",
                f.id === "x" || f.id === "y" ? "bg-[#1f1f1f]" : "bg-[#303030]",
              )}
            />
          </label>
        ))}
      </div>

      <h2 className="mt-[47px] h-[8px] pr-[15px] text-center leading-[8px] text-[#b0b0b0]">Spatial Bookmark Manager</h2>
      <div className="flex w-[47px] items-center py-px">
        <Tool name="zoomlayer" small />
        <Tool name="newbookmark" small />
        <Tool name="trash" small />
      </div>
      <table className="w-full border border-[#424242] bg-[#1f1f1f]">
        <thead>
          <tr>
            <th className="h-[12px] bg-[#333] pl-[3px] text-left font-normal">Name</th>
          </tr>
        </thead>
        <tbody>
          <tr>
            <td className="h-[40px]" />
          </tr>
        </tbody>
      </table>
      <div className="h-[7px] flex-none border border-[#484848] bg-[#383838]" />

      <h2 className="mt-[7px] h-[9px] flex-none pr-[15px] text-center leading-[9px] text-[#b0b0b0]">Layers</h2>
      <div className="flex w-[131px] flex-none items-center pb-[2px]">
        {["style", "addgroup", "eyeblue", "filterdrop", "expr"].map((t) => (
          <Tool key={t} name={t} small />
        ))}
        <Drop />
        <Tool name="expand" small />
        <Tool name="expand" small />
        <Tool name="remove" small />
      </div>
      <ul className="flex-1 border-l border-[#2c2c2c] bg-[#1f1f1f] font-bold text-[#e4e4e4]">
        <li className="flex h-[14px] items-center pl-3">
          <Icon name="eye" className="mr-1 size-[13px]" />
          <Icon name="polylayer" className="mr-[3px] size-[9px]" />
          marunouchi
        </li>
        <li className="flex h-[14px] items-center bg-[#107000] pl-3 italic underline">
          <Icon name="eyeoff" className="mr-1 size-[13px]" />
          <Icon name="linelayer" className="mr-[3px] size-[9px]" />
          鉄道データ clipped
        </li>
        <li className="flex h-[14px] items-center pl-1 italic">
          <Caret className="mr-1 rotate-90" />
          <Icon name="eyeoff" className="mr-1 size-[13px]" />
          <Icon name="xyzlayer" className="mr-[3px] size-[9px]" />
          Google Satellite
        </li>
      </ul>
    </aside>
  );
}

/* ---------- processing toolbox ---------- */

const PROVIDERS = [
  "Recently used", "3D Tiles", "Cartography", "Database", "File tools", "GPS",
  "Interpolation", "Layer tools", "Mesh", "Network analysis", "Plots",
  "Point cloud conversion", "Point cloud data management", "Point cloud extraction",
  "Raster analysis", "Raster creation", "Raster terrain analysis", "Raster tools",
  "Vector analysis", "Vector coverage", "Vector creation", "Vector general",
  "Vector geometry", "Vector overlay", "Vector selection", "Vector table",
  "Vector tiles", "GDAL", "GRASS", "QuickOSM",
];

const PROVIDER_ICONS: Record<string, string> = {
  "Recently used": "clock",
  GDAL: "gdal",
  GRASS: "grass",
  QuickOSM: "quickosm",
};

function ProcessingToolbox() {
  return (
    <aside className="flex w-[248px] flex-none flex-col">
      <div className="flex h-[9px] items-center pr-[2px]">
        <h2 className="flex-1 pr-[6px] text-center text-[#b8b8b8]">Processing Toolbox</h2>
        <button type="button" aria-label="Close" className="size-[5px] border border-[#666]" />
      </div>
      <div className="flex h-[17px] items-center">
        {["models", "python", "clock", "results"].map((t) => (
          <span key={t} className="flex w-[15px]"><Tool name={t} small /></span>
        ))}
        <Divider />
        <span className="flex w-[14px]"><Tool name="editplace" small /></span>
        <Divider />
        <span className="flex w-[14px]"><Tool name="wrench" small /></span>
      </div>
      <label className="flex h-[15px] items-center border border-[#4a4a4a] bg-[#1f1f1f] pl-[3px]">
        <Icon name="search" className="size-[7px]" />
        <input
          aria-label="Search"
          placeholder="Search⋯"
          className="ml-[6px] min-w-0 flex-1 bg-transparent font-['DejaVu_Sans'] text-[9px] font-extralight italic placeholder:text-[#7c7c7c]"
        />
      </label>
      <div className="flex-1 border-l border-[#3c3c3c] bg-[#1f1f1f] pt-[2px]">
        <ul className="grid h-[288px] auto-rows-fr text-[#d8d8d8]">
          {PROVIDERS.map((p) => (
            <li key={p} className="flex items-center">
              <Caret className="mr-[6px] ml-[2px]" />
              <Icon name={PROVIDER_ICONS[p] ?? "qgis"} className="mr-[3px] size-2" />
              {p}
            </li>
          ))}
        </ul>
      </div>
    </aside>
  );
}

/* ---------- status bar ---------- */

const FIELD = "h-[14px] border border-[#4a4a4a] bg-[#1f1f1f] px-[2px] font-['Liberation_Sans'] text-[#d0d0d0]";

function Spinner({ id, value, width }: { id: string; value: string; width: string }) {
  return (
    <span className="ml-[3px] flex">
      <input id={id} defaultValue={value} className={clsx(FIELD, width)} />
      <span className="flex w-3 flex-col justify-center gap-[2px] border border-[#505050] bg-[#444]">
        <button type="button" aria-label={`${id} up`} className="flex justify-center">
          <svg viewBox="0 0 8 8" className="size-1"><path d="M0 7h8L4 1z" fill="#c6c6c6" /></svg>
        </button>
        <button type="button" aria-label={`${id} down`} className="flex justify-center">
          <svg viewBox="0 0 8 8" className="size-1"><path d="M0 1h8L4 7z" fill="#c6c6c6" /></svg>
        </button>
      </span>
    </span>
  );
}

function StatusBar() {
  return (
    <footer className="flex h-[19px] flex-none items-center pr-[4px] pl-[2px] font-['DejaVu_Sans'] text-[8px] font-extralight text-[#b4b4b4]">
      <label className="flex h-[15px] w-[164px] items-center border border-[#4a4a4a] bg-[#1f1f1f] pl-[4px]">
        <Icon name="search" className="size-[7px]" />
        <input
          aria-label="Locate"
          placeholder="Type to locate (Ctrl+K)"
          className="ml-[5px] min-w-0 flex-1 bg-transparent text-[10px] placeholder:text-[#808080]"
        />
      </label>
      <span className="flex-1" />
      <label htmlFor="coordinate">Coordinate</label>
      <input id="coordinate" defaultValue="15544943, 4281923" className={clsx(FIELD, "ml-[3px] w-[83px]")} />
      <Icon name="satellite" className="mx-[4px] size-[8px]" />
      <label htmlFor="scale" className="ml-[4px]">Scale</label>
      <span className="relative ml-[3px] flex">
        <select id="scale" className={clsx(FIELD, "w-[57px] appearance-none")}>
          <option>1:235856</option>
        </select>
        <span className="pointer-events-none absolute inset-y-0 right-0 flex w-3 items-center justify-center border border-[#505050] bg-[#444]">
          <svg viewBox="0 0 8 8" className="size-[5px]"><path d="M0 1h8L4 7z" fill="#c6c6c6" /></svg>
        </span>
      </span>
      <Icon name="lock" className="ml-[8px] size-[8px]" />
      <label htmlFor="magnifier" className="ml-[5px]">Magnifier</label>
      <Spinner id="magnifier" value="100%" width="w-[45px]" />
      <label htmlFor="rotation" className="ml-[6px]">Rotation</label>
      <Spinner id="rotation" value="0.0 °" width="w-[45px]" />
      <label className="ml-[5px] flex items-center gap-1">
        <input
          type="checkbox"
          defaultChecked
          className="peer sr-only"
        />
        <span className="flex size-[11px] items-center justify-center bg-[#107000]">
          <svg viewBox="0 0 16 16" className="size-[9px]">
            <path d="M2 9l4 5 8-12" fill="none" stroke="#fff" strokeWidth="2.500" />
          </svg>
        </span>
        Render
      </label>
      <button type="button" className="ml-[7px] flex items-center gap-px">
        <Icon name="crs" className="size-[8px]" />
        EPSG:3857
      </button>
      <button type="button" aria-label="Messages" className="ml-[14px]">
        <Icon name="message" className="size-[9px]" />
      </button>
    </footer>
  );
}

/* ---------- desktop taskbar ---------- */

const APPS = [
  "taskview", "powershell", "copilot", "settings", "earth", "store", "wacom", "ring", "xampp",
  "chromea", "creative", "github", "explorer", "docker", "notepad", "snip", "qgis", "chromeb",
];
const RUNNING = ["chromea", "explorer", "chromeb"];

function Taskbar() {
  return (
    <nav className="flex h-[25px] flex-none items-center border-t border-[#3a3a3a] bg-[#1d1d1d] pr-[10px] text-[#ececec]">
      <span className="ml-[11px] size-[11px] rounded-full bg-linear-to-br from-[#fbb52e] to-[#ee6c14]" />
      <div className="ml-[5px] w-[200px] leading-[8px]">
        <div>13°C</div>
        <div>晴れ</div>
      </div>
      <button type="button" aria-label="Search" className="flex h-[17px] w-[144px] items-center justify-end rounded-full bg-[#f2f0ea] pr-[3px]">
        <svg viewBox="0 0 28 16" className="h-[14px] w-[25px]" aria-hidden="true">
          <path d="M5 2l2 3 3 3-3 3-2 3-2-3-3-3 3-3z" fill="#d9513d" />
          <circle cx="5" cy="8" r="2" fill="#f7d75c" />
          <circle cx="14" cy="10" r="3.800" fill="#1e7b4f" />
          <path d="M13 4h2v3h-2z" fill="#c99b2b" />
          <path d="M23 1l4 7-4 7-4-7z" fill="#c63a2f" />
          <path d="M23 4l2 4-2 4-2-4z" fill="#efc14a" />
        </svg>
      </button>
      <div className="ml-[2px] flex w-[422px] flex-none self-stretch">
        {APPS.map((app) => (
          <button
            key={app}
            type="button"
            aria-label={app}
            className={clsx(
              "relative flex flex-1 items-center justify-center",
              app === "qgis" && "rounded-sm bg-[#2f2f2f]",
            )}
          >
            <Icon name={app} className="size-[13px]" />
            {app === "qgis" && <span className="absolute bottom-[2px] h-px w-2 rounded bg-[#c4c4c4]" />}
            {RUNNING.includes(app) && <span className="absolute bottom-[2px] h-px w-[3px] bg-[#a0a0a0]" />}
          </button>
        ))}
      </div>
      <span className="flex-1" />
      <Icon name="chevron" className="mr-[11px] size-[9px]" />
      <Icon name="onedrive" className="mr-2 size-[9px]" />
      <Icon name="ime" className="mr-[10px] size-[10px]" />
      <Icon name="timer" className="mr-[11px] size-[10px]" />
      <Icon name="wifi" className="mr-[4px] size-[9px]" />
      <Icon name="mute" className="mr-[5px] size-[9px]" />
      <Icon name="battery" className="size-[11px]" />
      <div className="ml-[9px] text-right leading-[8px]">
        <div>14:55</div>
        <div>17/12/2025</div>
      </div>
    </nav>
  );
}

const MENUS = [
  "Pro&ject", "&Edit", "&View", "&Layer", "&Settings", "&Plugins", "Vect&or",
  "&Raster", "&Database", "&Web", "&Mesh", "Pro&cessing", "&Help",
];

export default function App() {
  return (
    <div className="relative flex min-h-screen flex-col overflow-hidden bg-[#323232] font-['Open_Sans','Noto_Sans_CJK_JP',sans-serif] text-[6px] leading-[8px]">
      <header className="flex h-3 flex-none items-center bg-[#f3f3f3] pr-[11px] font-['Roboto'] text-[7px] text-[#1a1a1a]">
        <Icon name="qgis" className="mr-[4px] size-[9px]" />
        <h1 className="flex-1">*Untitled Project — QGIS</h1>
        <div className="flex items-center gap-[18px]">
          <button type="button" aria-label="Minimize" className="h-px w-[6px] bg-[#333]" />
          <button type="button" aria-label="Restore" className="size-[5px] rounded-[1px] border border-[#333]" />
          <button type="button" aria-label="Close">
            <svg viewBox="0 0 8 8" className="size-[6px]"><path d="M0 0l8 8M8 0L0 8" stroke="#222" strokeWidth="1.200" /></svg>
          </button>
        </div>
      </header>

      <div className="flex h-3 flex-none items-stretch border-t border-[#5a5a5a] pl-px text-[#bdbdbd]">
        {MENUS.map((m) => (
          <button
            key={m}
            type="button"
            className={clsx("px-[4px]", m === "&View" && "bg-[#107000]")}
          >
            <Mnemonic text={m} />
          </button>
        ))}
      </div>
      <Toolbars />

      <main className="flex min-h-0 flex-1">
        <LeftDocks />
        <div className="ml-1 flex-1 border border-[#b5b5b5] bg-white" />
        <div className="w-[5px] flex-none" />
        <ProcessingToolbox />
      </main>

      <StatusBar />
      <Taskbar />
      <ViewMenu />
      <ToolbarsMenu />
    </div>
  );
}
